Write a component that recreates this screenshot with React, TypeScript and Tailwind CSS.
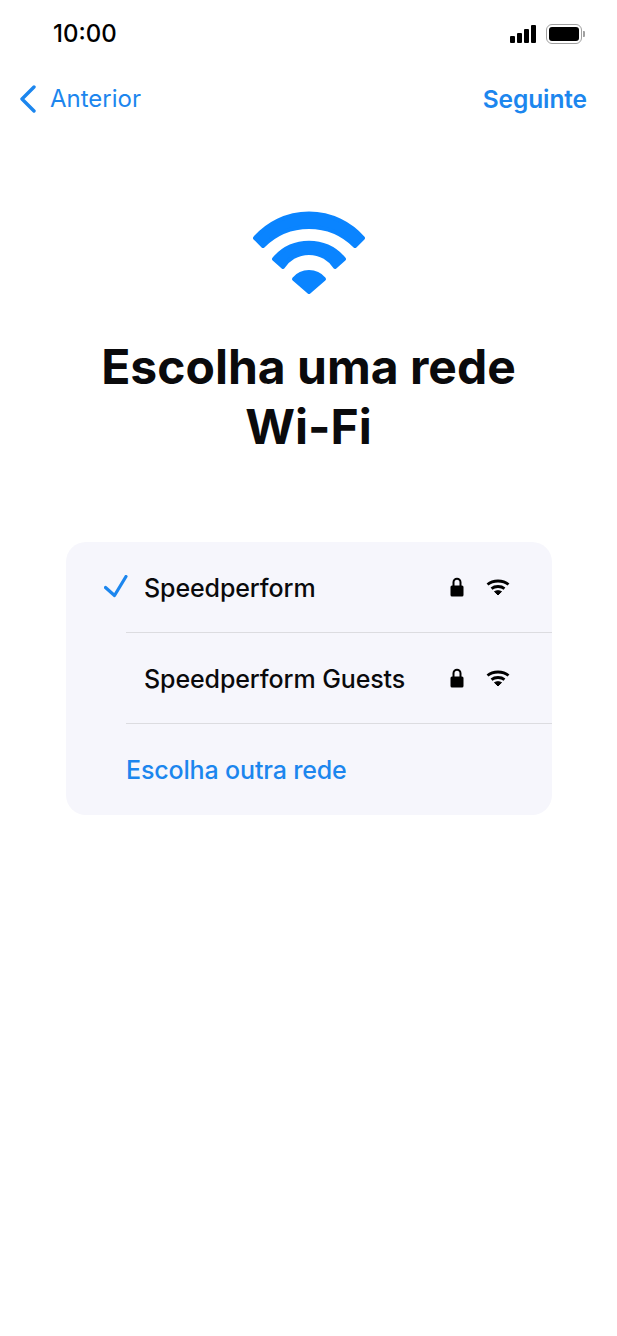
import React from 'react';

function WifiIcon({ className }: { className: string }) {
  return (
    <svg viewBox="0 0 116 84" className={className} fill="currentColor" stroke="currentColor" strokeWidth="4" strokeLinejoin="round">
      <path d="M4 27A71.6 71.6 0 0 1 112 27L104 35A65 65 0 0 0 12 35Z" />
      <path d="M23 48A46 46 0 0 1 93 48L84 56A31 31 0 0 0 32 56Z" />
      <path d="M43 68A19.600 19.600 0 0 1 73 68L58 81Z" />
    </svg>
  );
}

function SmallWifi() {
  return (
    <svg viewBox="0 0 24 18" className="h-[18px] w-6" fill="none" stroke="currentColor" strokeWidth="2.800">
      <path d="M1.500 6.500C7 1.800 17 1.800 22.500 6.500" />
      <path d="M5.500 10.600C9 7.800 15 7.800 18.500 10.600" />
      <path d="M8.500 13.600C10.500 12.400 13.500 12.400 15.500 13.600L12 17Z" fill="currentColor" strokeWidth="1" strokeLinejoin="round" />
    </svg>
  );
}

function Lock() {
  return (
    <svg viewBox="0 0 14 20" className="h-5 w-3.5" fill="currentColor">
      <path d="M3.500 10V5.200a3.500 3.500 0 0 1 7 0V10" fill="none" stroke="currentColor" strokeWidth="2" />
      <rect x="0.500" y="8.500" width="13" height="11" rx="1.500" />
    </svg>
  );
}

function Network({ name }: { name: string }) {
  return (
    <div className="flex h-[91px] items-center border-b border-[#dcdce0]">
      <span className="ml-[18px] pt-[3px] text-[25px] font-medium tracking-[-0.1px] text-[#0a0a0c]">{name}</span>
      <div className="ml-auto mr-[42px] flex items-center gap-[22px] text-black">
        <Lock />
        <SmallWifi />
      </div>
    </div>
  );
}

export default function App() {
  return (
    <div className="flex min-h-[1336px] w-full flex-col bg-white font-['Inter',sans-serif]">
      <div className="flex h-[68px] items-center justify-between pl-[53px] pr-[32px]">
        <span className="text-[24px] font-medium leading-none text-black">10:00</span>
        <div className="flex items-center gap-[10px]">
          <div className="flex items-end gap-[2px]">
            <div className="h-[7px] w-[5px] rounded-[1px] bg-black" />
            <div className="h-[10px] w-[5px] rounded-[1px] bg-black" />
            <div className="h-[14px] w-[5px] rounded-[1px] bg-black" />
            <div className="h-[18px] w-[5px] rounded-[1px] bg-black" />
          </div>
          <div className="flex items-center">
            <div className="flex h-5 w-9 items-center justify-center rounded-[6px] border-[1.5px] border-[#a0a0a0]">
              <div className="h-[14px] w-[30px] rounded-[3px] bg-black" />
            </div>
            <div className="ml-[1px] h-[6px] w-[2px] rounded-r-[1px] bg-[#a0a0a0]" />
          </div>
        </div>
      </div>

      <div className="flex h-[60px] mt-[1px] items-center justify-between pl-[20px] pr-[30px] text-[#1c86ee]">
        <div className="flex items-center gap-[14px]">
          <svg viewBox="0 0 16 28" className="h-7 w-4" fill="none" stroke="currentColor" strokeWidth="3.400" strokeLinecap="round" strokeLinejoin="round">
            <path d="M14 2 2 14l12 12" />
          </svg>
          <span className="text-[24px]">Anterior</span>
        </div>
        <span className="text-[24.500px] font-semibold tracking-[-0.1px]">Seguinte</span>
      </div>

      <div className="mt-[82px] flex justify-center text-[#0a84ff]">
        <WifiIcon className="h-[84px] w-[116px]" />
      </div>

      <h1 className="mt-[42px] text-center text-[48px] font-bold leading-[60px] text-[#0a0a0c]">
        Escolha uma rede
        <br />
        Wi-Fi
      </h1>

      <div className="ml-[66px] mt-[85px] w-[486px] rounded-[20px] bg-[#f6f6fc]">
        <div className="relative pl-[60px]">
          <svg viewBox="0 0 24 24" className="absolute left-[38px] top-[33px] h-6 w-6" fill="none" stroke="#1c86ee" strokeWidth="3.200" strokeLinecap="round" strokeLinejoin="round">
            <path d="M1.500 12.500 10.500 20.500 22 1.500" />
          </svg>
          <Network name="Speedperform" />
          <Network name="Speedperform Guests" />
          <div className="flex h-[91px] items-center pt-[2px] text-[25px] font-medium tracking-[-0.15px] text-[#1c86ee]">Escolha outra rede</div>
        </div>
      </div>
    </div>
  );
}
